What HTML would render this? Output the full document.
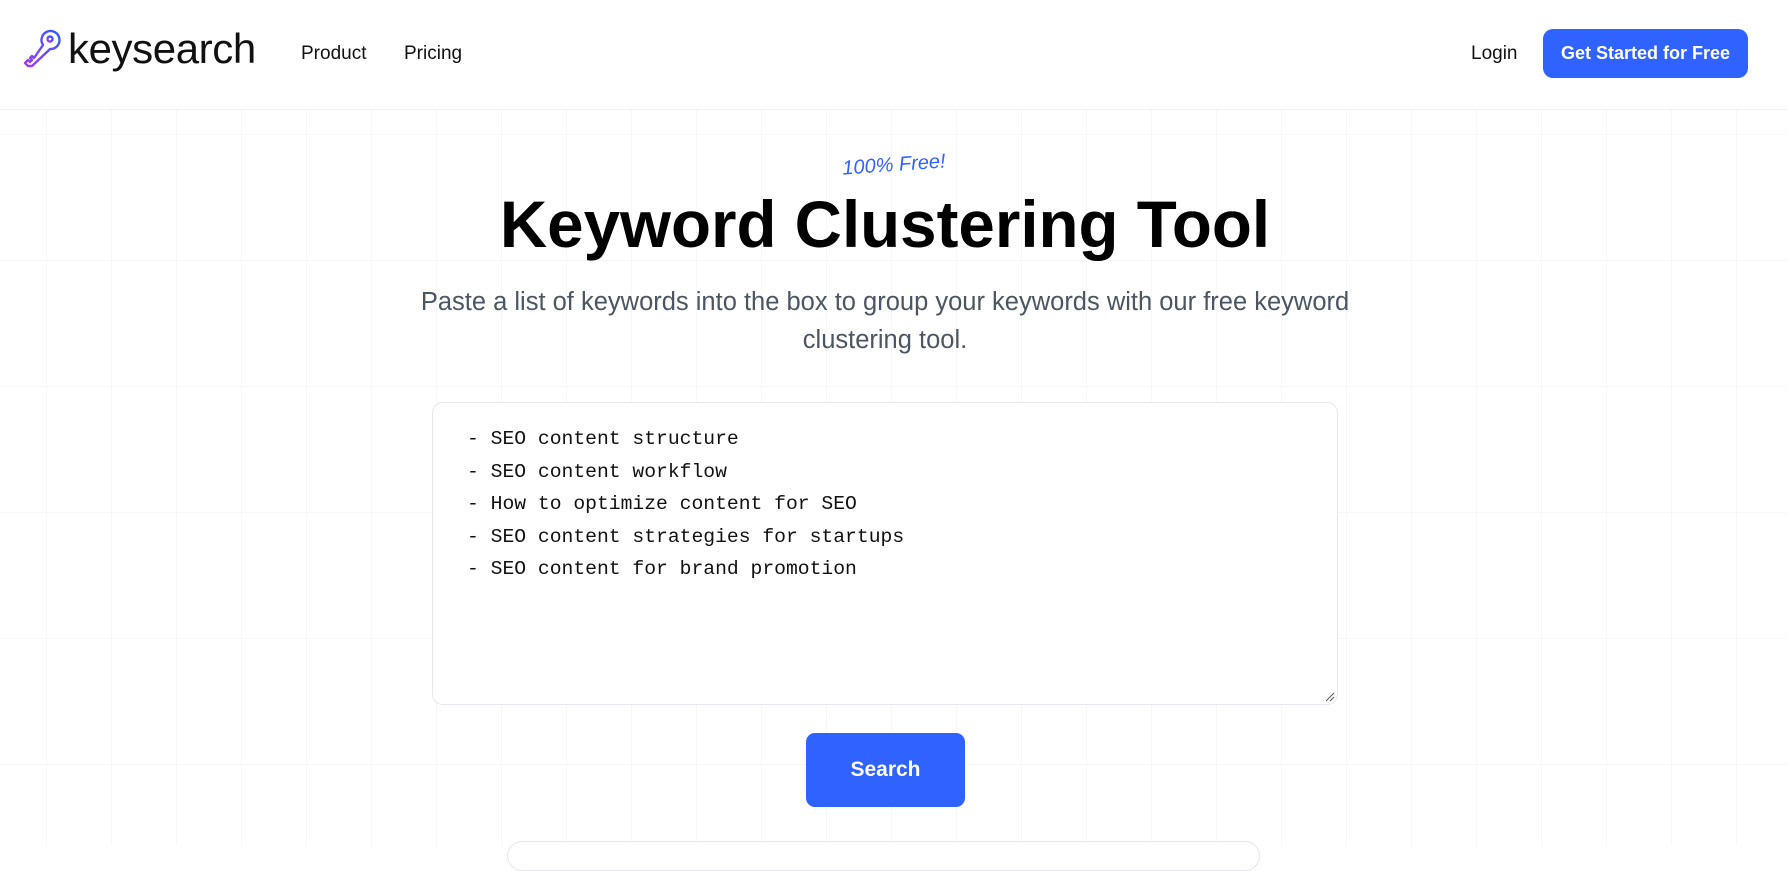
<!DOCTYPE html>
<html><head><meta charset="utf-8"><style>
*{margin:0;padding:0;box-sizing:border-box}
body{width:1788px;height:846px;overflow:hidden;background:#fff;font-family:"Liberation Sans",Arial,sans-serif;position:relative}
.grid{position:absolute;left:0;top:110px;width:1788px;height:736px;
background-image:linear-gradient(to right,#f6f7f8 1px,transparent 1px),linear-gradient(to bottom,#f6f7f8 1px,transparent 1px);
background-size:65px 126px;background-position:46px 24px}
.hdr{position:absolute;left:0;top:0;width:1788px;height:110px;background:#fff;border-bottom:1px solid #f0f1f3}
.abs{position:absolute;white-space:nowrap}
</style></head><body>
<div class="grid"></div>
<div class="hdr"></div>
<svg class="abs" style="left:20px;top:28px" width="42" height="42" viewBox="0 0 42 42">
<defs><linearGradient id="g" x1="1" y1="0" x2="0" y2="1"><stop offset="0" stop-color="#2f5bff"/><stop offset="1" stop-color="#a33cf0"/></linearGradient></defs>
<g fill="none" stroke="url(#g)" stroke-width="2.4" stroke-linejoin="round" stroke-linecap="round">
<path d="M23 17 A9 9 0 1 1 30 21 L28 23 L12 38 L8 38 L5 35 L8 32 L10 34 L12 32 L10 30 L12 28 L14 30 L23 17"/>
<circle cx="30" cy="11" r="2.5"/>
</g></svg>
<div class="abs" style="left:68px;top:25px;font-size:42px;color:#111;letter-spacing:-0.4px">keysearch</div>
<div class="abs" style="left:301px;top:43px;font-size:19px;color:#111">Product</div>
<div class="abs" style="left:404px;top:43px;font-size:19px;color:#111">Pricing</div>
<div class="abs" style="left:1471px;top:43px;font-size:19px;color:#111">Login</div>
<div class="abs" style="left:1543px;top:29px;width:205px;height:49px;background:#2f62ff;border-radius:10px;color:#fff;font-weight:bold;font-size:18px;text-align:center;line-height:49px">Get Started for Free</div>
<div class="abs" style="left:0;width:1788px;top:154px;text-align:center;font-size:20px;font-style:italic;color:#2f62ff;transform:rotate(-4deg)">100% Free!</div>
<div class="abs" style="left:-9px;width:1788px;top:187px;text-align:center;font-size:65.5px;font-weight:bold;color:#000">Keyword Clustering Tool</div>
<div class="abs" style="left:-9px;width:1788px;top:283px;text-align:center;font-size:25.5px;color:#4b5563;line-height:38px">Paste a list of keywords into the box to group your keywords with our free keyword<br>clustering tool.</div>
<div class="abs" style="left:432px;top:402px;width:906px;height:303px;border:1px solid #e5e7eb;border-radius:11px;background:#fff;padding:20px 0 0 34px;font-family:'Liberation Mono',monospace;font-size:19.7px;line-height:32.5px;color:#111">- SEO content structure<br>- SEO content workflow<br>- How to optimize content for SEO<br>- SEO content strategies for startups<br>- SEO content for brand promotion
<svg style="position:absolute;right:2px;bottom:2px" width="12" height="12"><path d="M11 3 L3 11 M11 7 L7 11" stroke="#555" stroke-width="1"/></svg></div>
<div class="abs" style="left:806px;top:733px;width:159px;height:74px;background:#2f62ff;border-radius:9px;color:#fff;font-weight:bold;font-size:21px;text-align:center;line-height:74px">Search</div>
<div class="abs" style="left:507px;top:841px;width:753px;height:30px;border:1px solid #e5e7eb;border-radius:20px;background:#fff"></div>
</body></html>
